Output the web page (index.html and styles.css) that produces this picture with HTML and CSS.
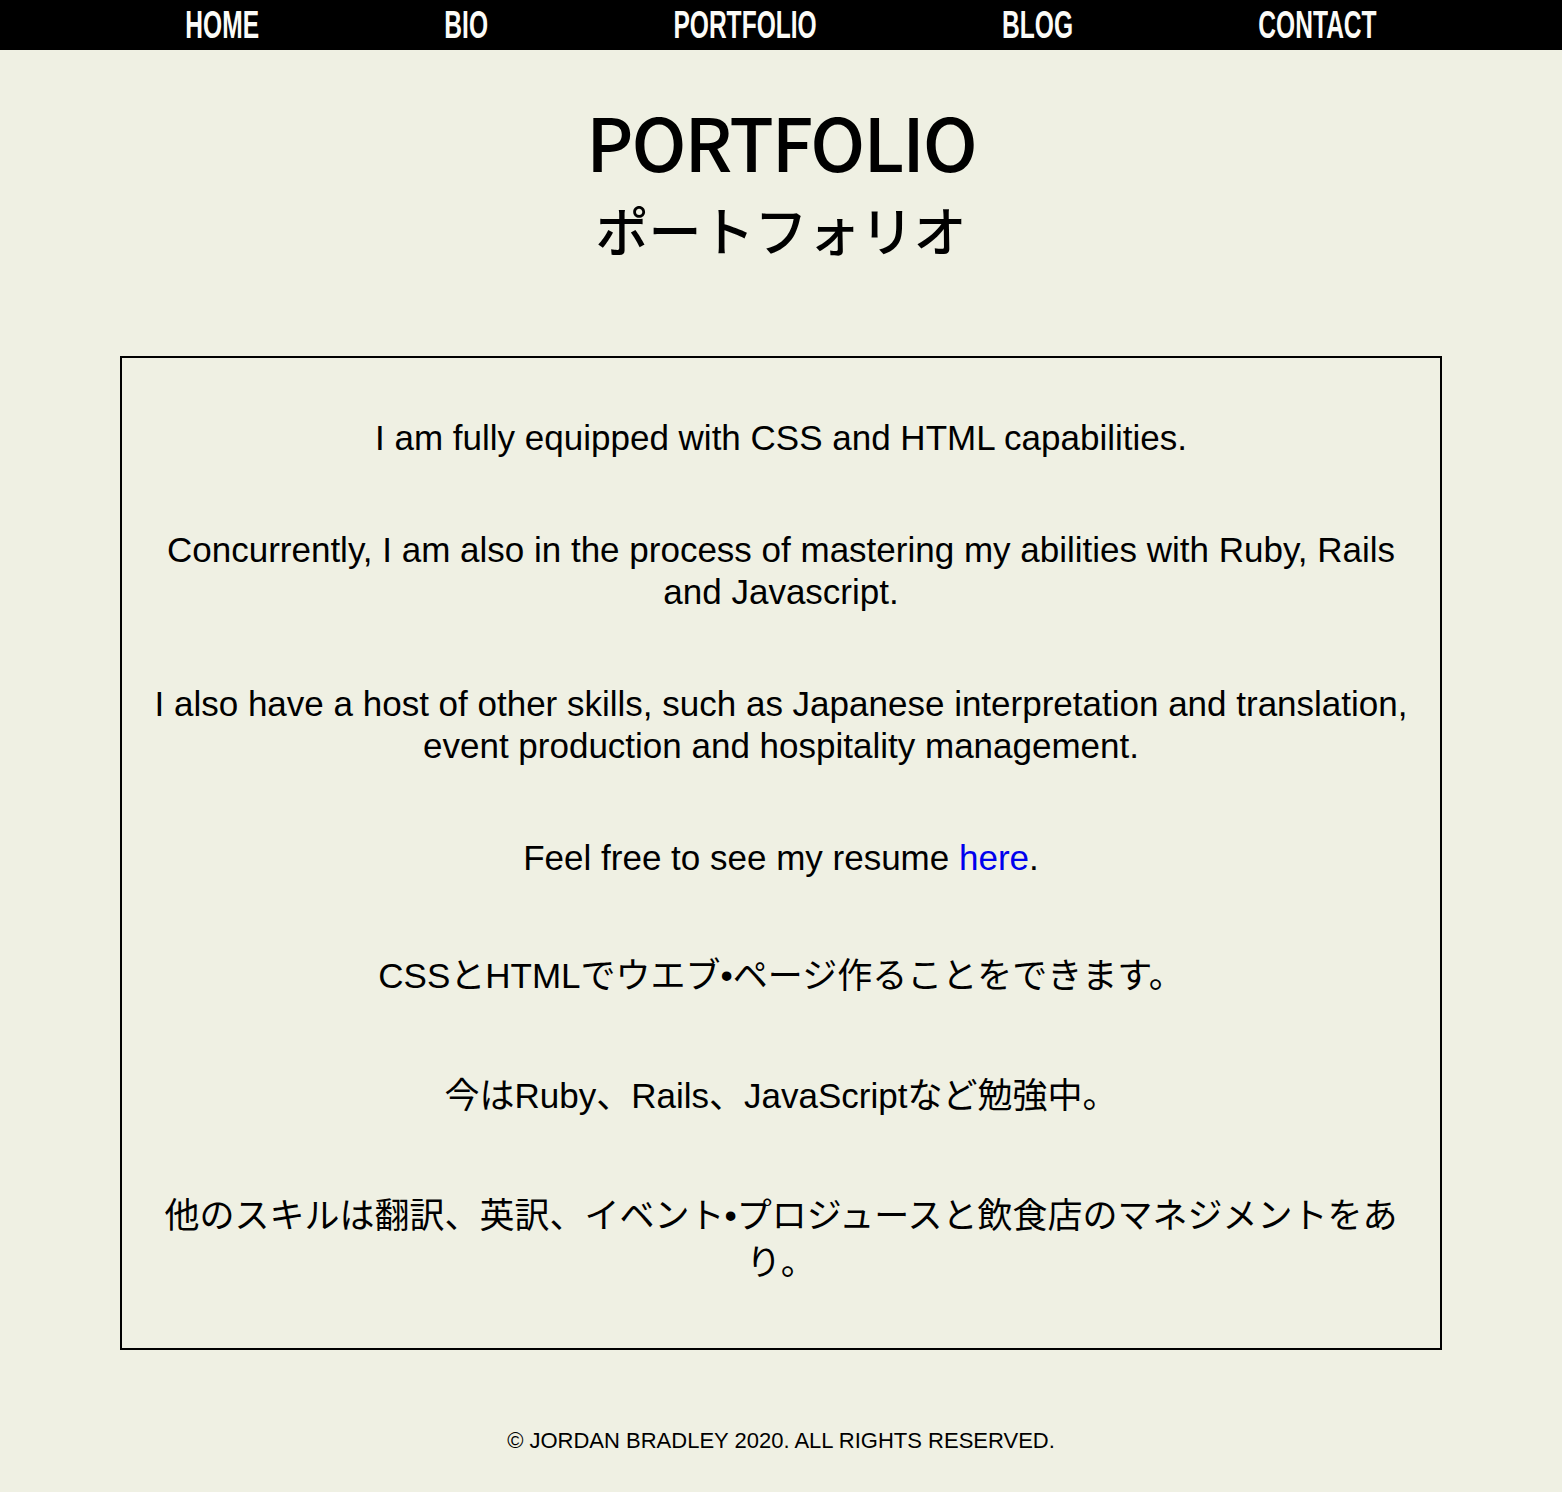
FILE: index.html
```html
<!DOCTYPE html>
<html lang="en">
<head>
<meta charset="utf-8">
<title>Portfolio</title>
<link rel="stylesheet" href="styles.css">
</head>
<body>
<nav class="nav">
  <div class="nav-track">
    <a class="nav-link" href="#">HOME</a>
    <a class="nav-link" href="#">BIO</a>
    <a class="nav-link" href="#">PORTFOLIO</a>
    <a class="nav-link" href="#">BLOG</a>
    <a class="nav-link" href="#">CONTACT</a>
  </div>
</nav>
<header class="title">
  <h1 class="title-en">PORTFOLIO</h1>
  <h2 class="title-ja">ポートフォリオ</h2>
</header>
<main class="box">
  <p>I am fully equipped with CSS and HTML capabilities.</p>
  <p>Concurrently, I am also in the process of mastering my abilities with Ruby, Rails and Javascript.</p>
  <p>I also have a host of other skills, such as Japanese interpretation and translation, event production and hospitality management.</p>
  <p>Feel free to see my resume <a class="link" href="#">here</a>.</p>
  <p class="ja">CSSとHTMLでウエブ•ページ作ることをできます。</p>
  <p class="ja">今はRuby、Rails、JavaScriptなど勉強中。</p>
  <p class="ja">他のスキルは翻訳、英訳、イベント•プロジュースと飲食店のマネジメントをあり。</p>
</main>
<footer class="footer">© JORDAN BRADLEY 2020. ALL RIGHTS RESERVED.</footer>
</body>
</html>
```

FILE: styles.css
```css
html, body {
  margin: 0;
  padding: 0;
}
body {
  background: #eff0e3;
  color: #000;
  font-family: "Liberation Sans", "Noto Sans CJK JP", sans-serif;
}
.nav {
  background: #000;
  height: 50px;
  overflow: hidden;
}
/* condensed look: the whole row is laid out wide, then squeezed horizontally */
.nav-track {
  width: calc(100% / 0.63);
  height: 50px;
  display: flex;
  justify-content: space-evenly;
  align-items: center;
  transform: scaleX(0.63);
  transform-origin: left center;
}
.nav-link {
  color: #fbfbf7;
  text-decoration: none;
  font-family: "Liberation Sans", sans-serif;
  font-weight: 700;
  font-size: 39px;
  line-height: 50px;
}
.title {
  text-align: center;
  font-family: "Noto Sans CJK JP", sans-serif;
  padding-top: 54px;
}
.title-en {
  margin: 0;
  font-size: 73px;
  font-weight: 500;
  letter-spacing: -2px;
  line-height: 1;
}
.title-ja {
  margin: 26px 0 0;
  font-size: 53px;
  font-weight: 500;
  line-height: 1;
}
.box {
  width: 1322px;
  margin: 100px auto 0;
  border: 2px solid #000;
  box-sizing: border-box;
  padding: 59px 24px 62px;
  text-align: center;
  font-size: 35px;
  line-height: 42px;
}
.box p {
  margin: 0 0 70px;
}
.box .ja {
  line-height: 47px;
  margin: 73px 0 0;
}
.box p:last-child {
  margin-bottom: 0;
}
.link {
  color: #0000ee;
  text-decoration: none;
}
.footer {
  text-align: center;
  font-size: 22px;
  line-height: 25px;
  padding: 78px 0 40px;
}
```
